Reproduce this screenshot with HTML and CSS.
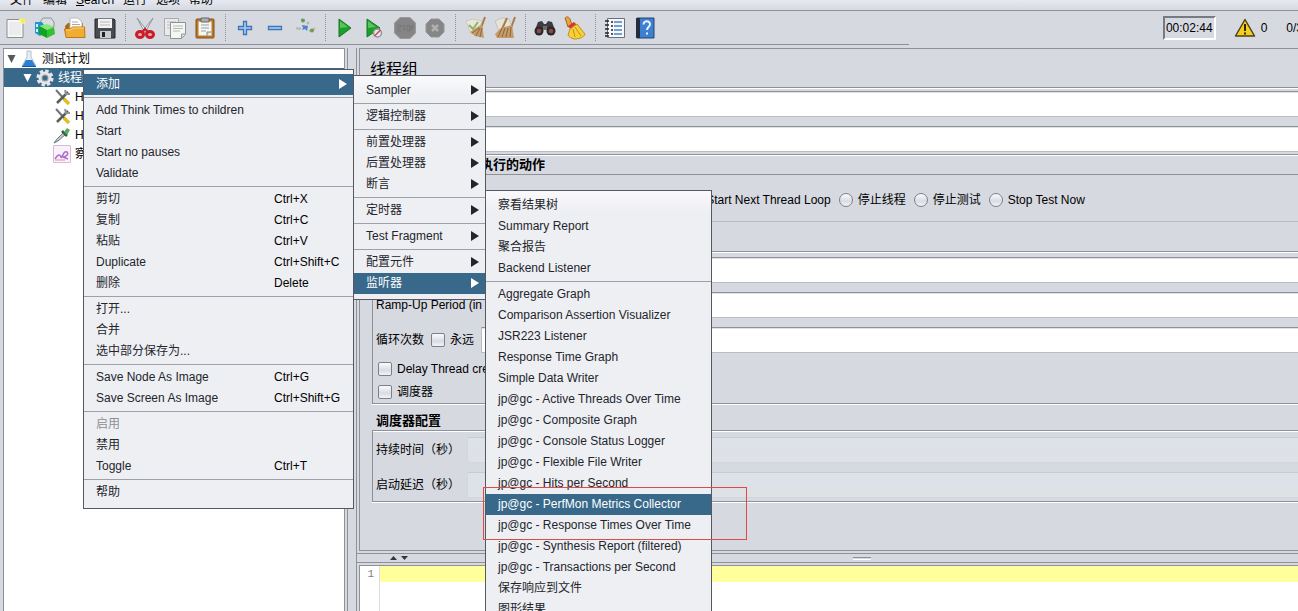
FILE: index.html
```html
<!DOCTYPE html>
<html lang="zh-CN">
<head>
<meta charset="utf-8">
<title>JMeter</title>
<link rel="stylesheet" href="styles.css">
</head>
<body>
<nav class="menubar">
  <button>文件</button><button>编辑</button><button><u>S</u>earch</button><button>运行</button><button>选项</button><button>帮助</button>
</nav>
<header class="header">
  <div class="toolbar">
    <button class="tool" aria-label="New"><svg viewBox="0 0 24 24"><path d="M4 3.500h16v18H4z" fill="#f7f7f8" stroke="#8c8e92"/><path d="M6 6h12v13H6z" fill="#ececee"/><path d="M16 3h6v5l-5-1z" fill="#fff7a0"/><circle cx="20" cy="4.500" r="2.500" fill="#f3ec5c"/></svg></button>
    <button class="tool" aria-label="Templates"><svg viewBox="0 0 24 24"><path d="M7 6l3-4h8l3 4v5H7z" fill="#d9dde0" stroke="#8c9499"/><path d="M2 6h7l2 3v8l-4 3-5-3z" fill="#2096cf"/><path d="M3 8h2v3H3zM3 13h2v3H3z" fill="#d5f2ff"/><path d="M6 10l8-2 7 3-7 3z" fill="#86e873"/><path d="M6 10l8 4v8l-8-4z" fill="#13a323"/><path d="M14 14l7-3 1 7-8 4z" fill="#35c034"/></svg></button>
    <button class="tool" aria-label="Open"><svg viewBox="0 0 24 24"><path d="M2 10l3-3h15v13H3z" fill="#a96b13"/><path d="M7 2h8l4 4v9H7z" fill="#fff" stroke="#b9b9b9"/><path d="M9 6h6M9 8.500h8" stroke="#aaa"/><path d="M1.500 13h6l2-2h12l.5 10.500H3z" fill="#f1ad31" stroke="#bd7915"/><path d="M3 14h5l2-2h11" fill="none" stroke="#ffd777"/></svg></button>
    <button class="tool" aria-label="Save"><svg viewBox="0 0 24 24"><path d="M2 3h19l1 1v18H2z" fill="#484b50" stroke="#25272a"/><path d="M5 3h14v9H5z" fill="#f2f2f2"/><path d="M7 6h10M7 9h10" stroke="#b7b7b7"/><path d="M7 15h11v7H7z" fill="#c9cbce"/><path d="M9 16h3v5H9z" fill="#222"/></svg></button>
    <span class="tool-gap"></span>
    <button class="tool" aria-label="Cut"><svg viewBox="0 0 24 24"><path d="M4 2l11 14-3 1zM20 2L9 16l3 1z" fill="#e7e9ec" stroke="#94979b"/><g fill="#e8aeb2" stroke="#ca1c27" stroke-width="3"><ellipse cx="7" cy="18.500" rx="3.500" ry="3"/><ellipse cx="17" cy="18.500" rx="3.500" ry="3"/></g><path d="M9 16l3-3 3 3" fill="none" stroke="#ca1c27" stroke-width="2"/></svg></button>
    <button class="tool" aria-label="Copy"><svg viewBox="0 0 24 24"><path d="M1.500 2.500h14v17h-14z" fill="#e9eaec" stroke="#aaa"/><path d="M4 6h9M4 9h5M4 12h5" stroke="#bbb"/><path d="M7.500 6.500h15v12l-4 4h-11z" fill="#f6f7f5" stroke="#8f928d"/><path d="M18.500 22v-4h4" fill="#ddd" stroke="#999"/><path d="M10 10h10M10 12.500h10M10 15h7" stroke="#b4b8b2"/></svg></button>
    <button class="tool" aria-label="Paste"><svg viewBox="0 0 24 24"><rect x="3" y="3" width="18" height="19" rx="1" fill="#b97a28" stroke="#845115"/><path d="M5.500 5.500h13v14h-13z" fill="#f7f7f5"/><path d="M8 2h8v4H8z" fill="#aeb0b2" stroke="#666"/><path d="M8 9h8M8 12h8M8 15h5" stroke="#9a9da1"/><path d="M14 20v-4h4.500" fill="#ddd" stroke="#888"/></svg></button>
    <span class="tool-gap"></span>
    <button class="tool" aria-label="Expand all"><svg viewBox="0 0 24 24"><path d="M10.500 5.500h3v5h5v3h-5v5h-3v-5h-5v-3h5z" fill="#a6cbf0" stroke="#3e74b8" stroke-width="1.300"/></svg></button>
    <button class="tool" aria-label="Collapse all"><svg viewBox="0 0 24 24"><path d="M5.500 10.500h13v3h-13z" fill="#b3d1f1" stroke="#3e74b8" stroke-width="1.300"/></svg></button>
    <button class="tool" aria-label="Toggle"><svg viewBox="0 0 24 24"><path d="M3 12l3 1 2-1M8 3l3 2M16 15l4-1 2-2" stroke="#b5bca9" stroke-width="2" fill="none"/><circle cx="10" cy="4.500" r="2" fill="#6f9358"/><circle cx="15" cy="7" r="1.500" fill="#a6c291"/><circle cx="19" cy="14.500" r="2" fill="#709b50"/><path d="M9 9l6 1-1 5-2-2-3 1 1-2z" fill="#4f82d4"/></svg></button>
    <span class="tool-gap"></span>
    <button class="tool" aria-label="Start"><svg viewBox="0 0 24 24"><path d="M6 3l12 9-12 9z" fill="#1d9d2b" stroke="#147a20"/><path d="M7 5l8 6-8 1z" fill="#57c55d"/></svg></button>
    <button class="tool" aria-label="Start no pauses"><svg viewBox="0 0 24 24"><path d="M4 3l13 9-13 9z" fill="#1d9d2b" stroke="#147a20"/><path d="M5 5l8 6-8 1z" fill="#57c55d"/><circle cx="14.500" cy="17" r="4" fill="#e8e8ea" stroke="#92959a" stroke-width="1.500"/><path d="M11.500 20l6-6" stroke="#c14b50" stroke-width="1.500"/></svg></button>
    <button class="tool" aria-label="Stop" disabled><svg viewBox="0 0 24 24"><path d="M7 1.500h10l5.500 5.500v10L17 22.500H7L1.500 17V7z" fill="#858585" stroke="#999"/><path d="M5 9h3v2H5v4h3M9.500 9.500h3M11 9.500V15M14 9.500h2.500V15H14zM18 15V9.500h2V12h-2" stroke="#777" fill="none"/></svg></button>
    <button class="tool" aria-label="Shutdown" disabled><svg viewBox="0 0 24 24"><path d="M8 3h8l5 5v8l-5 5H8l-5-5V8z" fill="#868686" stroke="#969696"/><path d="M9 9l6 6M15 9l-6 6" stroke="#b0b0b0" stroke-width="2.500"/></svg></button>
    <span class="tool-gap"></span>
    <button class="tool" aria-label="Clear"><svg viewBox="0 0 24 24"><path d="M3 5l7-2 9 2-3 10-8 3z" fill="#e9e5d8" stroke="#cfc9b8"/><path d="M6 9l4 4 5-7" stroke="#8cb466" stroke-width="2" fill="none"/><path d="M22 1l-4 11" stroke="#a87c48" stroke-width="2"/><path d="M19 8l2 14-9-2-5-4z" fill="#c39c69"/><path d="M17 12l-4 8M19 12l-2 9M16 12l-7 5" stroke="#8d683d"/></svg></button>
    <button class="tool" aria-label="Clear all"><svg viewBox="0 0 24 24"><path d="M2 5l7-3 7 1 3 8-13 4z" fill="#e8e3d8" stroke="#c9c4b8"/><path d="M14 2L9 13M22 1l-4 11" stroke="#a87c48" stroke-width="2"/><path d="M8 12l11-3 2 13H4l-2-4z" fill="#c39c69"/><path d="M9 12l-4 9M12 12l-3 9M15 12l-2 9M18 11l-1 10" stroke="#8d683d"/></svg></button>
    <span class="tool-gap"></span>
    <button class="tool" aria-label="Search"><svg viewBox="0 0 24 24"><path d="M5 6l4-1 2 3h2l2-3 4 1 3 8H2z" fill="#3d3d3f"/><circle cx="6" cy="15" r="4.500" fill="#29292b"/><circle cx="18" cy="15" r="4.500" fill="#29292b"/><circle cx="6" cy="15" r="2.300" fill="#8c4c42"/><circle cx="18" cy="15" r="2.300" fill="#8c4c42"/><path d="M10 10h4v4h-4z" fill="#6c6d70"/></svg></button>
    <button class="tool" aria-label="Reset search"><svg viewBox="0 0 24 24"><path d="M2 2c2-2 4-1 5 1l2 6-4 2z" fill="#e9a341" stroke="#a9651d"/><path d="M5 10l6-4 3 3-6 5z" fill="#d13a2a"/><path d="M7 13l7-5 8 10c-1 3-5 5-11 5-3-1-5-2-6-4z" fill="#f7cf38" stroke="#c2901a"/><path d="M10 13l2 8M12 11l6 9" stroke="#c2901a"/></svg></button>
    <span class="tool-gap"></span>
    <button class="tool" aria-label="Function helper"><svg viewBox="0 0 24 24"><path d="M4.500 2.500h17v19h-17z" fill="#f6f8fb" stroke="#6b6e73"/><path d="M2 5h4M2 9h4M2 13h4M2 17h4M2 20h4" stroke="#222" stroke-width="1.500"/><path d="M8 6h2M8 10h2M8 14h2M8 18h2" stroke="#222" stroke-width="1.500"/><path d="M11 6h8M11 10h8M11 14h8M11 18h8" stroke="#4a7fcb" stroke-width="1.500"/></svg></button>
    <button class="tool" aria-label="Help"><svg viewBox="0 0 24 24"><path d="M4 2h17v20H4z" fill="#3d7fd0" stroke="#24466f"/><path d="M3 2h4v20H3z" fill="#232d3d"/><path d="M10.500 8.500c0-4.500 7-4 6.500 0-.3 2.500-3 2.500-3 5.500M14 16.500v2" stroke="#e9f3ff" stroke-width="2" fill="none"/></svg></button>
  </div>
  <div class="status">
    <output class="timer">00:02:44</output>
    <svg class="warn" viewBox="0 0 22 20"><path d="M11 1.500L20.500 18h-19z" fill="#f8ce1d" stroke="#4b4219" stroke-width="1.500" stroke-linejoin="round"/><path d="M11 6v7M11 14.500v2" stroke="#2d2810" stroke-width="2"/></svg>
    <span>0</span>
    <span class="threads">0/3</span>
  </div>
</header>

<main class="split">
  <section class="tree" aria-label="Tree">
    <ul>
      <li class="node"><svg class="twist" viewBox="0 0 15 18"><path d="M3 5h8l-4 8z"/></svg><svg class="icon" viewBox="0 0 18 18"><path d="M7 1h4v6l5 9H2l5-9z" fill="#e5edf5" stroke="#b4c1cd"/><path d="M6 10h6l4 7H2z" fill="#2d7fd2"/><path d="M2 16.500h14" stroke="#1b55a0"/></svg><span>测试计划</span></li>
      <li class="node level-1 selected"><svg class="twist" viewBox="0 0 15 18"><path d="M3 5h8l-4 8z"/></svg><svg class="icon" viewBox="0 0 18 18"><circle cx="9" cy="9" r="6.800" fill="none" stroke="#e3e5e8" stroke-width="3.500" stroke-dasharray="3.300 2.040"/><circle cx="9" cy="9" r="5" fill="#91979d" stroke="#e3e5e8" stroke-width="3"/><circle cx="9" cy="9" r="2.300" fill="#39698a"/></svg><span>线程组</span></li>
      <li class="node level-2"><svg class="icon" viewBox="0 0 18 18"><path d="M3 2l10 11" stroke="#6e757c" stroke-width="2"/><path d="M11 11l5 5" stroke="#e0bf23" stroke-width="3.500"/><path d="M15 4L4 15" stroke="#5b5e56" stroke-width="2.500"/><path d="M12 2l1 4 4 0" stroke="#8d949a" stroke-width="2" fill="none"/></svg><span>HTTP信息头</span></li>
      <li class="node level-2"><svg class="icon" viewBox="0 0 18 18"><path d="M3 2l10 11" stroke="#6e757c" stroke-width="2"/><path d="M11 11l5 5" stroke="#e0bf23" stroke-width="3.500"/><path d="M15 4L4 15" stroke="#5b5e56" stroke-width="2.500"/><path d="M12 2l1 4 4 0" stroke="#8d949a" stroke-width="2" fill="none"/></svg><span>HTTP请求默认值</span></li>
      <li class="node level-2"><svg class="icon" viewBox="0 0 18 18"><path d="M1 17l3-4 7-7 2 2-8 7z" fill="#c3cbd0" stroke="#6d777c"/><path d="M9 5l5 5" stroke="#2f6338" stroke-width="2.500"/><path d="M11 6l3-4 3 2-3 5z" fill="#57a860"/></svg><span>HTTP请求</span></li>
      <li class="node level-2"><svg class="icon" viewBox="0 0 18 18"><path d="M.5 .5h17v17H.5z" fill="#f8f2fb" stroke="#dcb8d8"/><path d="M2 14c3-5 5-5 6-2s2-7 6-5c2 2-1 5-4 5l5 2" stroke="#b06bd0" stroke-width="1.500" fill="none"/><path d="M2 15h10" stroke="#e58ca7"/></svg><span>察看结果树</span></li>
    </ul>
  </section>

  <div class="right">
    <section class="config">
      <h1>线程组</h1>
      <div class="etched fields">
        <div class="field"><label for="name">名称：</label><input id="name" type="text"></div>
        <div class="field"><label for="notes">注释：</label><input id="notes" type="text"></div>
      </div>
      <h2 class="etched band">在取样器错误后要执行的动作</h2>
      <div class="radios">
        <label><input type="radio" name="act">继续</label>
        <label><input type="radio" name="act">Start Next Thread Loop</label>
        <label><input type="radio" name="act">停止线程</label>
        <label><input type="radio" name="act">停止测试</label>
        <label><input type="radio" name="act">Stop Test Now</label>
      </div>
      <h2 class="props-title">线程属性</h2>
      <div class="etched group props">
        <div class="field"><label for="num">线程数：</label><input id="num" type="text"></div>
        <div class="field"><label for="ramp">Ramp-Up Period (in seconds):</label><input id="ramp" type="text"></div>
        <div class="field"><label for="loops">循环次数</label><label class="check"><input type="checkbox">永远</label><input id="loops" type="text"></div>
        <div class="checks">
          <label class="check"><input type="checkbox">Delay Thread creation until needed</label>
          <label class="check"><input type="checkbox">调度器</label>
        </div>
      </div>
      <h2 class="etched sched-title">调度器配置</h2>
      <div class="etched group sched">
        <div class="field"><label for="dur">持续时间（秒）</label><input id="dur" type="text" disabled></div>
        <div class="field"><label for="delay">启动延迟（秒）</label><input id="delay" type="text" disabled></div>
      </div>
      <div class="etched rest"></div>
    </section>
    <div class="divider"><svg class="arrows" viewBox="0 0 18 6"><path d="M0 5l3.500-4L7 5zM11 1h7l-3.500 4z" fill="#33363c"/></svg><span class="grip"></span></div>
    <section class="editor"><span class="gutter">1</span><div class="code"><div class="line"></div></div></section>
  </div>
</main>

<ul class="menu menu-edit">
  <li><button class="on sub">添加</button></li>
  <li class="cut"><button>Add Think Times to children</button></li>
  <li><button>Start</button></li>
  <li><button>Start no pauses</button></li>
  <li><button>Validate</button></li>
  <li class="cut"><button>剪切<kbd>Ctrl+X</kbd></button></li>
  <li><button>复制<kbd>Ctrl+C</kbd></button></li>
  <li><button>粘贴<kbd>Ctrl+V</kbd></button></li>
  <li><button>Duplicate<kbd>Ctrl+Shift+C</kbd></button></li>
  <li><button>删除<kbd>Delete</kbd></button></li>
  <li class="cut"><button>打开...</button></li>
  <li><button>合并</button></li>
  <li><button>选中部分保存为...</button></li>
  <li class="cut"><button>Save Node As Image<kbd>Ctrl+G</kbd></button></li>
  <li><button>Save Screen As Image<kbd>Ctrl+Shift+G</kbd></button></li>
  <li class="cut"><button disabled>启用</button></li>
  <li><button>禁用</button></li>
  <li><button>Toggle<kbd>Ctrl+T</kbd></button></li>
  <li class="cut"><button>帮助</button></li>
</ul>

<ul class="menu menu-add">
  <li><button class="sub">Sampler</button></li>
  <li class="cut"><button class="sub">逻辑控制器</button></li>
  <li class="cut"><button class="sub">前置处理器</button></li>
  <li><button class="sub">后置处理器</button></li>
  <li><button class="sub">断言</button></li>
  <li class="cut"><button class="sub">定时器</button></li>
  <li class="cut"><button class="sub">Test Fragment</button></li>
  <li class="cut"><button class="sub">配置元件</button></li>
  <li><button class="on sub">监听器</button></li>
</ul>

<ul class="menu menu-listener">
  <li><button>察看结果树</button></li>
  <li><button>Summary Report</button></li>
  <li><button>聚合报告</button></li>
  <li><button>Backend Listener</button></li>
  <li class="cut"><button>Aggregate Graph</button></li>
  <li><button>Comparison Assertion Visualizer</button></li>
  <li><button>JSR223 Listener</button></li>
  <li><button>Response Time Graph</button></li>
  <li><button>Simple Data Writer</button></li>
  <li><button>jp@gc - Active Threads Over Time</button></li>
  <li><button>jp@gc - Composite Graph</button></li>
  <li><button>jp@gc - Console Status Logger</button></li>
  <li><button>jp@gc - Flexible File Writer</button></li>
  <li><button>jp@gc - Hits per Second</button></li>
  <li><button class="on">jp@gc - PerfMon Metrics Collector</button></li>
  <li><button>jp@gc - Response Times Over Time</button></li>
  <li><button>jp@gc - Synthesis Report (filtered)</button></li>
  <li><button>jp@gc - Transactions per Second</button></li>
  <li><button>保存响应到文件</button></li>
  <li><button>图形结果</button></li>
</ul>
<div class="callout"></div>
</body>
</html>
```
FILE: styles.css
```css
* { box-sizing: border-box; }

body {
  margin: 0;
  height: 100vh;
  display: flex;
  flex-direction: column;
  overflow: hidden;
  position: relative;
  background: #d6d9e0;
  color: #000;
  font: 12px/14px "Liberation Sans", "Noto Sans CJK SC", sans-serif;
}

button {
  border: 0;
  padding: 0;
  background: none;
  color: inherit;
  font: inherit;
}

ul { list-style: none; margin: 0; padding: 0; }
h1, h2 { margin: 0; }

/* Menu bar and toolbar */
.menubar {
  display: flex;
  align-items: flex-end;
  gap: 9px;
  flex: none;
  height: 11px;
  padding: 0 10px 3px;
  overflow: hidden;
  background: linear-gradient(#e6e9f1, #d6d9e0);
  border-bottom: 1px solid #8e9199;
}

.header {
  display: flex;
  justify-content: space-between;
  flex: none;
  height: 37px;
}

.toolbar {
  display: flex;
  width: 70%;
  height: 34px;
  border-bottom: 1px solid #8e9199;
}

.tool {
  display: grid;
  place-items: center;
  width: 30px;
}
.tool svg { width: 24px; height: 24px; }

.tool-gap {
  width: 10px;
  display: flex;
  justify-content: center;
}
.tool-gap::before {
  content: "";
  margin: 3px 0;
  border-left: 1px dotted #8e9199;
}

.status {
  display: flex;
  align-items: center;
  height: 34px;
  margin-right: -5px;
}
.timer {
  padding: 3px 1px;
  border: 2px solid;
  border-color: #777a80 #fff #fff #777a80;
  margin-right: 18px;
}
.warn { width: 22px; height: 20px; margin-right: 5px; }
.threads { margin-left: 19px; }

/* Split pane */
.split {
  display: flex;
  flex: 1;
  min-height: 0;
}

.tree {
  flex: none;
  width: 342px;
  margin-left: 3px;
  background: #fff;
  border: 1px solid #8e9199;
  border-bottom: 0;
  box-shadow: 2px 0 #d6d9e0, 3px 0 #8e9199;
}

.node {
  display: flex;
  align-items: center;
  height: 19px;
}
.node .icon { width: 18px; height: 18px; margin-right: 4px; }
.node .twist { width: 16px; height: 18px; fill: #55585e; }
.level-1 { padding-left: 16px; }
.level-2 { padding-left: 49px; }
.selected { background: #39698a; color: #fff; }
.selected .twist { fill: #fff; }

.right {
  display: flex;
  flex: 1;
  flex-direction: column;
  min-width: 0;
  margin-left: 11px;
  border-left: 1px solid #8e9199;
}

.config {
  display: flex;
  flex-direction: column;
  flex: none;
  margin-left: 2px;
  padding-left: 12px;
  border: 1px solid #8e9199;
  border-right: 0;
}

h1 {
  padding: 10px 0 6px;
  font-size: 16px;
  font-weight: 400;
  line-height: 22px;
}
.config h1, .fields { margin-left: -2px; }
h2 { padding-left: 4px; font-size: 13px; }

.etched {
  border-top: 1px solid #8e9199;
  box-shadow: inset 0 1px #fff;
}

.fields {
  display: grid;
  gap: 9px;
  padding: 3px 0 2px;
}
.field {
  display: flex;
  align-items: center;
  gap: 7px;
}
.field input[type="text"] {
  flex: 1;
  min-width: 0;
  height: 26px;
  border: 1px solid #b9bcc4;
  border-top-color: #8e9199;
  border-right: 0;
  background: #fff;
  box-shadow: inset 0 1px #dfe1e5;
}
.field input[type="text"]:disabled {
  border-color: #d3d6dd;
  border-top-color: #c8cbd2;
  background: linear-gradient(#dde1ea, #dee2e5);
  box-shadow: none;
}

.band {
  line-height: 19px;
  border-bottom: 1px solid #8e9199;
}

.radios {
  display: flex;
  justify-content: center;
  gap: 8px;
  padding: 18px 0 14px 51px;
  border-bottom: 1px solid #b9bcc4;
}
.radios label, .check {
  display: flex;
  align-items: center;
  gap: 5px;
}

input[type="radio"], input[type="checkbox"] {
  appearance: none;
  width: 14px;
  height: 14px;
  margin: 0;
  border: 1px solid #7c8087;
  border-radius: 2px;
  background: linear-gradient(#fafbfc, #d9dce2 60%, #f2f4f7);
}
input[type="radio"] { border-radius: 50%; }

.props-title { padding-top: 12px; line-height: 17px; }
.group {
  display: grid;
  gap: 9px;
  padding-left: 3px;
  border-left: 1px solid #8e9199;
}
.props { padding-top: 5px; padding-bottom: 4px; }
.checks {
  display: grid;
  gap: 9px;
  padding-left: 2px;
}
.sched-title { padding-top: 7px; line-height: 19px; }
.sched { padding-top: 6px; padding-bottom: 3px; }
.rest { height: 49px; }

.divider {
  display: flex;
  align-items: center;
  flex: none;
  height: 10px;
  margin-top: 2px;
  padding-left: 33px;
  border: 1px solid #8e9199;
  border-width: 1px 0;
}
.arrows { width: 18px; height: 6px; }
.grip {
  width: 18px;
  height: 3px;
  margin-left: 49%;
  border-top: 1px solid #8e9199;
  border-bottom: 1px solid #fff;
}

.editor {
  display: flex;
  flex: 1;
  min-height: 0;
  margin: 2px 0 0 2px;
  border: 1px solid #8e9199;
  border-right: 0;
  border-bottom: 0;
  background: #fff;
}
.gutter {
  width: 20px;
  padding: 2px 5px 0 0;
  border-right: 1px solid #ddd;
  color: #808080;
  font: 11px/13px "Liberation Mono", monospace;
  text-align: right;
}
.code { flex: 1; }
.line { height: 16px; background: #ffff9c; }

/* Popup menus */
.menu {
  position: absolute;
  padding: 4px 0 5px;
  border: 1px solid #55585f;
  background: linear-gradient(#fafafc, #eeeff3 20px);
  color: #23252c;
}
.menu button {
  display: flex;
  align-items: center;
  width: 100%;
  height: 21px;
  padding: 0 10px 1px 12px;
  text-align: left;
}
.menu button:disabled { color: #8e8f95; }
.menu .on { background: #39698a; color: #fff; }
.menu .sub::after {
  content: "";
  margin-left: auto;
  border: 5px solid transparent;
  border-left: 8px solid;
  border-right: 0;
}
.menu .sub { padding-right: 6px; }
.menu kbd {
  width: 67px;
  margin-left: auto;
  margin-right: 2px;
  font: inherit;
  color: #000;
}
.cut::before {
  content: "";
  display: block;
  margin: 2px 0;
  border-top: 1px solid #9da0a8;
}
.menu-edit { left: 83px; top: 69px; width: 271px; }
.menu-add { left: 353px; top: 75px; width: 133px; }
.menu-listener { left: 485px; top: 190px; width: 227px; }

.callout {
  position: absolute;
  left: 483px;
  top: 487px;
  width: 264px;
  height: 53px;
  border: 1px solid #dc4a4a;
}
```
